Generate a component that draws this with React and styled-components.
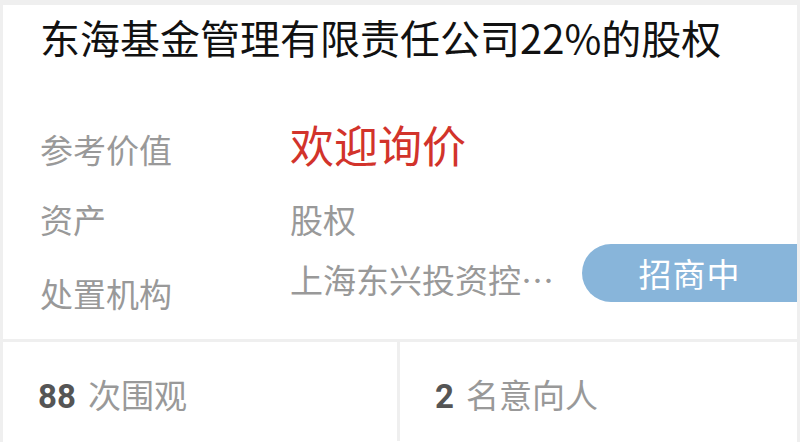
import styled, { createGlobalStyle } from "styled-components";

const GlobalStyle = createGlobalStyle`
  html, body {
    margin: 0;
    padding: 0;
    background: #efefef;
  }
  body {
    font-family: "Noto Sans CJK SC", "Noto Sans", sans-serif;
  }
`;

const App = () => {
  return (
    <>
      <GlobalStyle />
      <Card>
        <Title>东海基金管理有限责任公司22%的股权</Title>
        <Info>
          <Row>
            <Label>参考价值</Label>
            <Price>欢迎询价</Price>
          </Row>
          <Row $top={37}>
            <Label>资产</Label>
            <Value>股权</Value>
          </Row>
          <OrgRow>
            <Label $offset={33}>处置机构</Label>
            <Value $offset={19} $clip>上海东兴投资控股发展有限公司</Value>
            <Badge>招商中</Badge>
          </OrgRow>
        </Info>
        <Stats>
          <Stat>
            <Num>88</Num>
            <Unit>次围观</Unit>
          </Stat>
          <Stat $last>
            <Num>2</Num>
            <Unit>名意向人</Unit>
          </Stat>
        </Stats>
      </Card>
    </>
  );
};

const Card = styled.div`
  margin: 5px 3px 0 3px;
  background: #ffffff;
  min-height: 437px;
`;

const Title = styled.h1`
  margin: 0;
  padding: 12px 0 0 37px;
  height: 40px;
  font-size: 40px;
  line-height: 40px;
  font-weight: 400;
  color: #111111;
  white-space: nowrap;
`;

const Info = styled.div`
  padding: 65px 0 29px 37px;
`;

const Row = styled.div`
  display: flex;
  align-items: baseline;
  margin-top: ${(p) => (p.$top ? p.$top + "px" : "0")};
`;

const OrgRow = styled.div`
  display: flex;
  align-items: flex-start;
  margin-top: 8px;
  height: 66px;
`;

const Label = styled.div`
  width: 250px;
  flex-shrink: 0;
  font-size: 33px;
  line-height: 33px;
  color: #999999;
  margin-top: ${(p) => (p.$offset ? p.$offset + "px" : "0")};
`;

const Price = styled.div`
  font-size: 44px;
  line-height: 44px;
  color: #d2332b;
`;

const Value = styled.div`
  font-size: 33px;
  line-height: 33px;
  color: #999999;
  margin-top: ${(p) => (p.$offset ? p.$offset + "px" : "0")};
  ${(p) =>
    p.$clip &&
    `
    width: 270px;
    white-space: nowrap;
    overflow: hidden;
    text-overflow: ellipsis;
  `}
`;

const Badge = styled.div`
  margin-left: auto;
  width: 215px;
  height: 58px;
  display: flex;
  align-items: center;
  justify-content: center;
  background: #88b5da;
  border-radius: 29px 0 0 29px;
  color: #ffffff;
  font-size: 33px;
  letter-spacing: 1px;
`;

const Stats = styled.div`
  display: grid;
  grid-template-columns: 1fr 1fr;
  border-top: 3px solid #efefef;
`;

const Stat = styled.div`
  display: flex;
  align-items: baseline;
  padding: 28px 0 30px 35px;
  height: 99px;
  box-sizing: border-box;
  border-right: ${(p) => (p.$last ? "none" : "3px solid #efefef")};
`;

const Num = styled.span`
  font-family: "Roboto", "Noto Sans CJK SC", sans-serif;
  font-size: 33px;
  font-weight: 700;
  color: #555555;
  margin-right: 12px;
`;

const Unit = styled.span`
  font-size: 33px;
  color: #999999;
`;

export default App;
